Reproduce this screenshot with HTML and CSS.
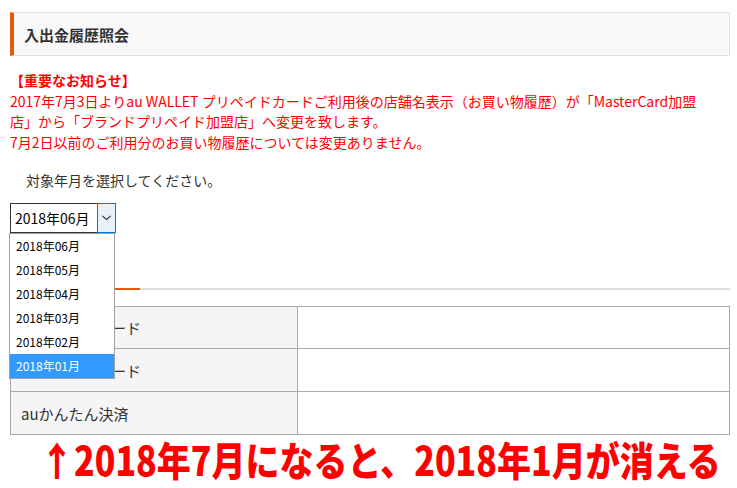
FILE: index.html
```html
<!DOCTYPE html>
<html lang="ja">
<head>
<meta charset="utf-8">
<link rel="stylesheet" href="styles.css">
</head>
<body>
<div class="page">
  <div class="head"><h1>入出金履歴照会</h1></div>
  <div class="notice">
    <p class="notice-title">【重要なお知らせ】</p>
    <p>2017年7月3日よりau WALLET プリペイドカードご利用後の店舗名表示（お買い物履歴）が「MasterCard加盟<br>店」から「ブランドプリペイド加盟店」へ変更を致します。<br>7月2日以前のご利用分のお買い物履歴については変更ありません。</p>
  </div>
  <p class="lead">対象年月を選択してください。</p>
  <div class="select-wrap">
    <div class="select">
      <span class="select-value">2018年06月</span>
      <span class="select-btn"><svg width="9" height="6" viewBox="0 0 9 6"><path d="M0.5 0.8 L4.5 4.6 L8.5 0.8" fill="none" stroke="#222" stroke-width="1.1"/></svg></span>
    </div>
    <ul class="options">
      <li>2018年06月</li>
      <li>2018年05月</li>
      <li>2018年04月</li>
      <li>2018年03月</li>
      <li>2018年02月</li>
      <li class="active">2018年01月</li>
    </ul>
  </div>
  <div class="tabline"><span class="tab-active"></span></div>
  <table class="grid">
    <tr><th>プリペイドカード</th><td></td></tr>
    <tr><th>クレジットカード</th><td></td></tr>
    <tr><th>auかんたん決済</th><td></td></tr>
  </table>
  <div class="caption"><span>↑2018年7月になると、2018年1月が消える</span></div>
</div>
</body>
</html>
```
FILE: styles.css
```css
html, body { margin: 0; padding: 0; background: #fff; }
body { font-family: "Noto Sans CJK JP", "Noto Sans", sans-serif; color: #333; }
.page { padding: 12px 7px 0 10px; }
.head {
  height: 42px;
  border: 1px solid #e2e2e2;
  border-left: 4px solid #e8590c;
  background: #f8f8f8;
  display: flex;
  align-items: center;
  padding-left: 10px;
}
.head h1 { margin: 0; font-size: 15px; font-weight: bold; color: #333; line-height: 1; }
.notice { margin-top: 14px; color: #f00; font-size: 14px; line-height: 20.5px; }
.notice p { margin: 0; white-space: nowrap; }
.notice-title { font-weight: bold; }
.lead { margin: 18px 0 0 16px; font-size: 14px; line-height: 20px; color: #333; }
.select-wrap { position: relative; margin-top: 13px; height: 30px; }
.select {
  width: 106px; height: 30px; box-sizing: border-box;
  border: 1px solid #333;
  display: flex; background: #fff;
}
.select-value { flex: 1; font-size: 14px; line-height: 28px; padding-left: 4px; color: #000; }
.select-btn {
  width: 17px; margin: -1px -1px -1px 0;
  border: 1px solid #0078d7; background: #e5f1fb;
  display: flex; align-items: center; justify-content: center;
}
.options {
  position: absolute; left: -1px; top: 30px; z-index: 2;
  margin: 0; padding: 0; list-style: none;
  width: 106px; box-sizing: border-box;
  border: 1px solid #a0a0a0; background: #fff;
}
.options li { height: 24px; line-height: 24px; font-size: 12px; padding-left: 6px; color: #000; }
.options li.active { background: #3399ff; color: #fff; }
.tabline { margin-top: 55px; height: 2px; background: #dedede; display: flex; }
.tab-active { width: 130px; background: #e8590c; }
.grid {
  margin-top: 16px; width: 720px; border-collapse: collapse;
  font-size: 15px; color: #333;
}
.grid th, .grid td { border: 1px solid #aaa; height: 41px; padding: 0; }
.grid tr:nth-child(2) th, .grid tr:nth-child(2) td, .grid tr:nth-child(3) th, .grid tr:nth-child(3) td { height: 42px; }
.grid th { width: 276px; background: #f5f5f5; text-align: left; font-weight: normal; padding-left: 10px; }
.caption { margin-top: 3px; padding-left: 30px; height: 44px; }
.caption span {
  display: inline-block; white-space: nowrap;
  font-size: 34px; font-weight: 900; color: #f00; line-height: 44px;
  transform: scaleY(1.17); transform-origin: left center;
}
```
